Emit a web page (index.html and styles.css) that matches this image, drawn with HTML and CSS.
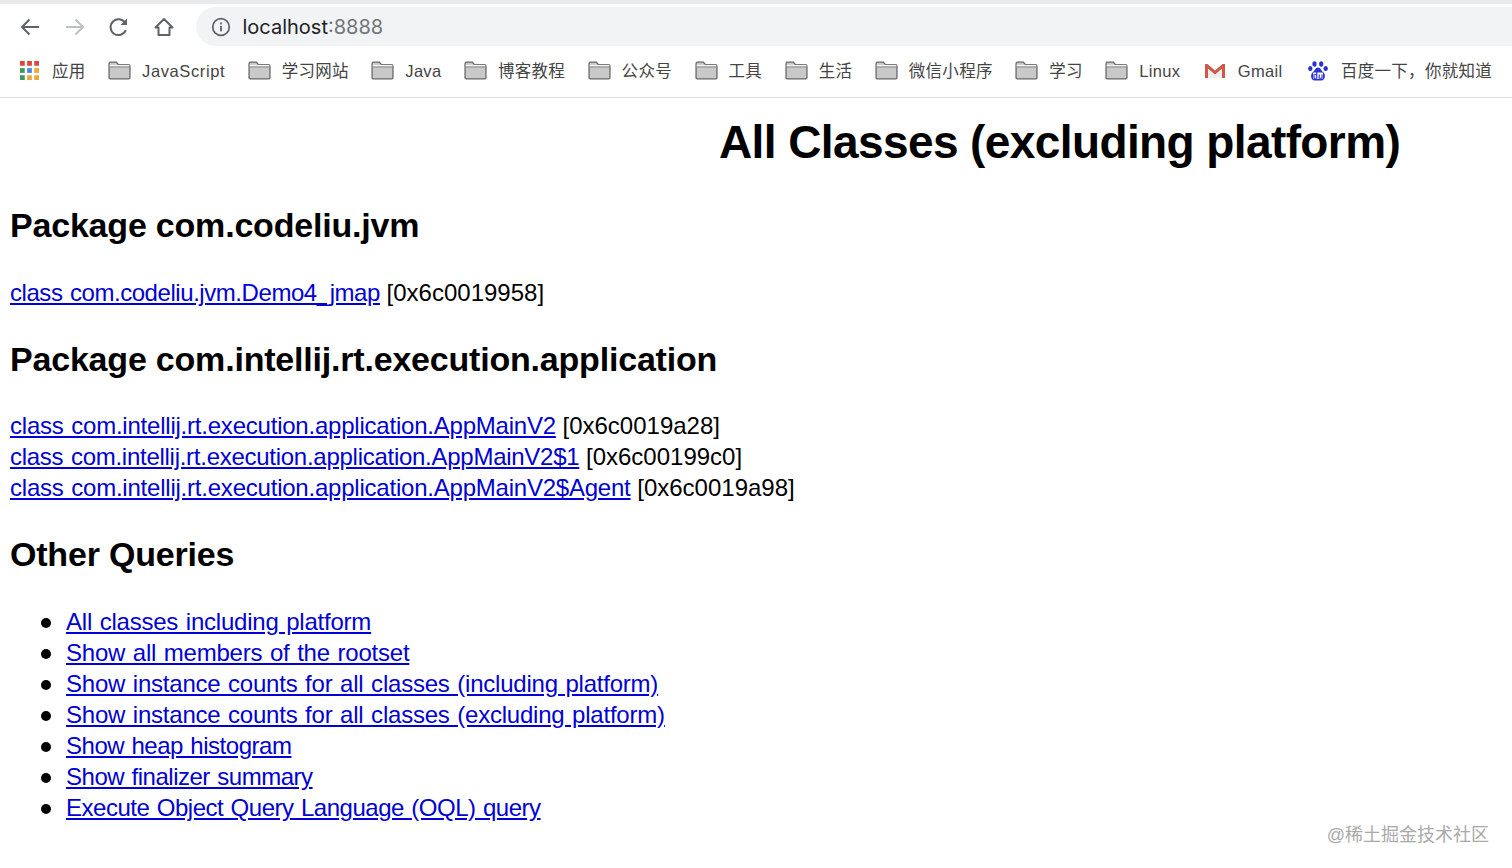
FILE: index.html
```html
<!DOCTYPE html>
<html>
<head>
    <meta charset="utf-8">
    <meta name="viewport" content="width=device-width, initial-scale=1">
    <link rel="stylesheet" href="styles.css">
    <title>All Classes (excluding platform)</title>
</head>
<body>
<svg class="defs" width="0" height="0">
    <symbol id="folder" viewBox="0 0 22 18">
        <path d="M1 16V2.500C1 1.700 1.600 1 2.400 1H8l2 2.500h9.600c.8 0 1.400.6 1.400 1.400V16c0 .6-.5 1-1 1H2c-.5 0-1-.4-1-1z" fill="#c9c9c9" stroke="#666" stroke-width="1.200"/>
        <path d="M1.500 5.500h19" stroke="#777" stroke-width="1" fill="none"/>
        <path d="M1.600 4.300h18.800" stroke="#f4f4f4" stroke-width="1.400" fill="none"/>
    </symbol>
</svg>

<div class="toolbar">
    <div class="navs">
        <svg class="nav" viewBox="0 0 22 22"><path d="M20 11H3M10.500 3.500L3 11l7.500 7.500" fill="none" stroke="#5f6368" stroke-width="2"/></svg>
        <svg class="nav" viewBox="0 0 22 22"><path d="M2 11h17M11.500 3.500L19 11l-7.500 7.500" fill="none" stroke="#bdc1c6" stroke-width="2"/></svg>
        <svg class="nav" viewBox="0 0 22 22"><path d="M17.800 14.200a7.900 7.900 0 1 1-.6-7.200" fill="none" stroke="#5f6368" stroke-width="2"/><path d="M19 2.500V9h-6.500z" fill="#5f6368"/></svg>
        <svg class="nav" viewBox="0 0 22 22"><path d="M11 3L2.500 11.500H5.500V19h11v-7.500h3z" fill="none" stroke="#5f6368" stroke-width="2" stroke-linejoin="round"/></svg>
    </div>
    <div class="omnibox">
        <svg class="info" viewBox="0 0 20 20"><circle cx="10" cy="10" r="8.300" fill="none" stroke="#5f6368" stroke-width="1.700"/><rect x="9.100" y="8.800" width="1.800" height="5.500" fill="#5f6368"/><rect x="9.100" y="5.500" width="1.800" height="1.900" fill="#5f6368"/></svg>
        <span class="host">localhost</span><span class="port">:8888</span>
    </div>
</div>

<div class="bookmarks">
    <div class="mark">
        <svg class="apps" viewBox="0 0 20 20">
            <rect x="0" y="0" width="5" height="5" fill="#d9483b"/><rect x="7.500" y="0" width="5" height="5" fill="#d9483b"/><rect x="15" y="0" width="5" height="5" fill="#d9483b"/>
            <rect x="0" y="7.500" width="5" height="5" fill="#3d9a5b"/><rect x="7.500" y="7.500" width="5" height="5" fill="#4a86e8"/><rect x="15" y="7.500" width="5" height="5" fill="#e8a93a"/>
            <rect x="0" y="15" width="5" height="5" fill="#3d9a5b"/><rect x="7.500" y="15" width="5" height="5" fill="#e8a93a"/><rect x="15" y="15" width="5" height="5" fill="#e8a93a"/>
        </svg>
        <span>应用</span>
    </div>
    <div class="mark"><svg class="folder"><use href="#folder"/></svg><span class="wide">JavaScript</span></div>
    <div class="mark"><svg class="folder"><use href="#folder"/></svg><span>学习网站</span></div>
    <div class="mark"><svg class="folder"><use href="#folder"/></svg><span>Java</span></div>
    <div class="mark"><svg class="folder"><use href="#folder"/></svg><span>博客教程</span></div>
    <div class="mark"><svg class="folder"><use href="#folder"/></svg><span>公众号</span></div>
    <div class="mark"><svg class="folder"><use href="#folder"/></svg><span>工具</span></div>
    <div class="mark"><svg class="folder"><use href="#folder"/></svg><span>生活</span></div>
    <div class="mark"><svg class="folder"><use href="#folder"/></svg><span>微信小程序</span></div>
    <div class="mark"><svg class="folder"><use href="#folder"/></svg><span>学习</span></div>
    <div class="mark"><svg class="folder"><use href="#folder"/></svg><span>Linux</span></div>
    <div class="mark gm">
        <svg class="gmail" viewBox="0 0 22 16"><path d="M1 15V1h2.500L11 7.500 18.500 1H21v14h-3V5.800l-7 6-7-6V15z" fill="#d0574a"/><path d="M4 15V5.800l7 6 7-6V15z" fill="#eeeeee"/></svg>
        <span>Gmail</span>
    </div>
    <div class="mark last">
        <svg class="baidu" viewBox="0 0 20 20">
            <ellipse cx="6.500" cy="3" rx="2.100" ry="2.800" fill="#2932d1"/><ellipse cx="13.200" cy="3" rx="2.100" ry="2.800" fill="#2932d1"/>
            <ellipse cx="2.300" cy="7.500" rx="2.200" ry="2.600" fill="#2932d1"/><ellipse cx="17.700" cy="7.500" rx="2.200" ry="2.600" fill="#2932d1"/>
            <path d="M10 6.500c-2.500 0-3 3-5.500 5-2.500 2.200-1.500 8 2 8h7c3.500 0 4.500-5.800 2-8-2.500-2-3-5-5.500-5z" fill="#2932d1"/>
            <rect x="5" y="11.500" width="10" height="6.500" rx="1" fill="#fff"/>
            <path d="M8.800 10.500v6.800H6v-3.500h2.800M11.200 13.500v3.800h2.800v-3.800" fill="none" stroke="#2932d1" stroke-width="1.100"/>
        </svg>
        <span>百度一下，你就知道</span>
    </div>
</div>

<div class="page">
    <h1>All Classes (excluding platform)</h1>

    <h2>Package com.codeliu.jvm</h2>
    <p class="classes">
        <a href="#" class="tight">class com.codeliu.jvm.Demo4_jmap</a> [0x6c0019958]
    </p>

    <h2>Package com.intellij.rt.execution.application</h2>
    <p class="classes">
        <a href="#">class com.intellij.rt.execution.application.AppMainV2</a> [0x6c0019a28]<br>
        <a href="#" class="snug">class com.intellij.rt.execution.application.AppMainV2$1</a> [0x6c00199c0]<br>
        <a href="#">class com.intellij.rt.execution.application.AppMainV2$Agent</a> [0x6c0019a98]
    </p>

    <h2>Other Queries</h2>
    <ul>
        <li><a href="#">All classes including platform</a></li>
        <li><a href="#">Show all members of the rootset</a></li>
        <li><a href="#">Show instance counts for all classes (including platform)</a></li>
        <li><a href="#">Show instance counts for all classes (excluding platform)</a></li>
        <li><a href="#" class="tight">Show heap histogram</a></li>
        <li><a href="#" class="tight">Show finalizer summary</a></li>
        <li><a href="#" class="tight">Execute Object Query Language (OQL) query</a></li>
    </ul>
</div>

<div class="watermark">@稀土掘金技术社区</div>
</body>
</html>
```

FILE: styles.css
```css
body{
    margin: 0;
    background: #fff;
    color: #000;
    font-family: "Liberation Sans", "Noto Sans CJK SC", sans-serif;
    overflow: hidden;
}

.defs{
    position: absolute;
}

.toolbar{
    height: 46px;
    box-sizing: border-box;
    border-top: 4px solid #e8e9eb;
    display: flex;
    align-items: center;
    padding-left: 19px;
    padding-top: 3px;
}

.navs{
    display: flex;
    gap: 22.5px;
}

.nav{
    width: 22px;
    height: 22px;
    display: block;
}

.omnibox{
    flex: 1;
    height: 39px;
    margin-left: 21px;
    background: #f1f3f4;
    border-radius: 20px 0 0 20px;
    display: flex;
    align-items: center;
    padding-left: 15px;
    font-size: 20px;
    font-family: "Inter", "Liberation Sans", sans-serif;
}

.info{
    width: 20px;
    height: 20px;
    margin-right: 12px;
}

.host{
    color: #202124;
}

.port{
    color: #70757a;
}

.bookmarks{
    height: 52px;
    box-sizing: border-box;
    border-bottom: 1.5px solid #dcdcdc;
    display: flex;
    align-items: center;
    gap: 22.5px;
    padding-left: 20px;
    padding-bottom: 2px;
    font-size: 16.5px;
    line-height: 20px;
    color: #444;
}

.mark{
    display: flex;
    align-items: center;
    gap: 11px;
    white-space: nowrap;
    letter-spacing: .3px;
}

.mark.gm{
    margin-left: 1px;
    gap: 12px;
}

.mark.last{
    margin-left: 3px;
}

.wide{
    letter-spacing: .6px;
}

.apps{
    width: 19px;
    height: 19px;
    margin-right: 2px;
}

.folder{
    width: 23px;
    height: 19px;
}

.gmail{
    width: 22px;
    height: 16px;
}

.baidu{
    width: 20px;
    height: 20px;
    margin-right: 2px;
}

.page{
    padding: 0 10px;
}

h1{
    margin: 16px 0 0;
    padding-left: 709px;
    font-size: 46px;
    font-weight: bold;
    line-height: 56px;
    letter-spacing: -.6px;
    white-space: nowrap;
}

h2{
    margin: 0;
    font-size: 34px;
    line-height: 40px;
    font-weight: bold;
    letter-spacing: -.2px;
    white-space: nowrap;
}

h1 + h2{
    margin-top: 35px;
}

.classes{
    margin: 31px 0;
    font-size: 24px;
    line-height: 31px;
}

h1 + h2 + .classes{
    margin-top: 32px;
}

a{
    color: #0000d6;
    word-spacing: 1.2px;
}

.classes a{
    letter-spacing: -.22px;
}

.classes a.snug{
    letter-spacing: -.27px;
}

.classes a.tight{
    letter-spacing: -.44px;
}

ul{
    margin: 32px 0 0;
    padding-left: 56px;
    list-style: none;
    font-size: 24px;
    line-height: 31px;
}

ul a{
    letter-spacing: -.22px;
}

ul a.tight{
    letter-spacing: -.48px;
}

li::before{
    content: "";
    display: inline-block;
    width: 10px;
    height: 10px;
    border-radius: 50%;
    background: #000;
    margin-left: -25px;
    margin-right: 15px;
    vertical-align: 2px;
}

.watermark{
    position: absolute;
    right: 23px;
    top: 820px;
    font-size: 18px;
    color: #a9a9a9;
    white-space: nowrap;
}
```
